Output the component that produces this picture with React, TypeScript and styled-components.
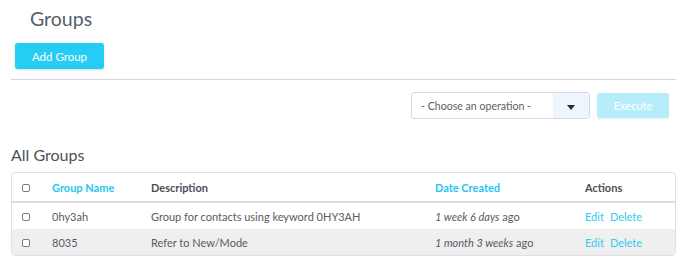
import React, { FC } from 'react';
import styled, { createGlobalStyle } from 'styled-components';

const GlobalStyle = createGlobalStyle`
    body {
        margin: 0;
        background: #fff;
        font-family: Lato, "Open Sans", sans-serif;
        color: #555a60;
    }
`;

const Page = styled.div`
    display: flex;
    flex-direction: column;
    padding: 0 12px 0 11px;
`;

const Title = styled.h1`
    margin: 7px 0 0 19px;
    font-size: 19.5px;
    line-height: 24px;
    font-weight: 400;
    color: #565e6d;
`;

const AddButton = styled.button`
    align-self: flex-start;
    margin: 12px 0 0 4px;
    width: 89px;
    height: 26px;
    border: none;
    border-radius: 3px;
    background: #25cdf5;
    box-shadow: 0 1px 2px rgba(0, 0, 0, 0.15);
    color: #fff;
    font-family: inherit;
    font-size: 11.5px;
`;

const Rule = styled.hr`
    width: 100%;
    margin: 10px 0 0;
    border: none;
    border-top: 1px solid #d6d6d6;
`;

const Toolbar = styled.div`
    display: flex;
    justify-content: flex-end;
    align-items: center;
    gap: 7px;
    margin-top: 12px;
    padding-right: 7px;
`;

const Select = styled.div`
    display: flex;
    width: 179px;
    height: 27px;
    box-sizing: border-box;
    border: 1px solid #d3dae6;
    border-radius: 3px;
    overflow: hidden;
    background: #fff;
`;

const SelectText = styled.span`
    flex: 1;
    display: flex;
    align-items: center;
    padding-left: 9px;
    font-size: 10.6px;
    color: #5a5f66;
`;

const SelectArrow = styled.span`
    width: 36px;
    display: flex;
    align-items: center;
    justify-content: center;
    padding-top: 3px;
    background: #eef5fd;
`;

const ExecuteButton = styled.button`
    width: 72px;
    height: 25px;
    border: none;
    border-radius: 3px;
    background: #b7edfa;
    box-shadow: 0 1px 2px rgba(0, 0, 0, 0.08);
    color: #fff;
    font-family: inherit;
    font-size: 11px;
`;

const SectionTitle = styled.h2`
    margin: 26px 0 0;
    font-size: 16px;
    line-height: 19px;
    font-weight: 400;
    color: #4d5058;
`;

const TableBox = styled.div`
    margin-top: 8px;
    border: 1px solid #dde0e6;
    border-radius: 4px;
    overflow: hidden;
`;

const Table = styled.table`
    width: 100%;
    border-collapse: collapse;
    table-layout: fixed;
    font-size: 11px;
`;

const HeadCell = styled.th<{ sortable?: boolean }>`
    height: 28px;
    padding: 0 0 0 10px;
    text-align: left;
    font-weight: 700;
    color: ${p => (p.sortable ? '#27c6ef' : '#4a4e55')};
    border-bottom: 2px solid #dcdcdc;
`;

const Row = styled.tr<{ shaded?: boolean }>`
    background: ${p => (p.shaded ? '#efefef' : '#fff')};
`;

const Cell = styled.td`
    height: 26px;
    padding: 0 0 0 10px;
    color: #585c62;
    white-space: nowrap;
`;

const Check = styled.input.attrs({ type: 'checkbox' })`
    appearance: none;
    display: block;
    width: 8px;
    height: 8px;
    margin: 1px 0 0 0;
    border: 1px solid #7b7b7b;
    border-radius: 2px;
    background: #fff;
`;

const Link = styled.a`
    color: #35c9ef;
    text-decoration: none;
    margin-right: 6px;
`;

const groups = [
    { name: '0hy3ah', description: 'Group for contacts using keyword 0HY3AH', created: '1 week 6 days' },
    { name: '8035', description: 'Refer to New/Mode', created: '1 month 3 weeks' },
];

const App: FC = () => (
    <>
        <GlobalStyle />
        <Page>
            <Title>Groups</Title>
            <AddButton>Add Group</AddButton>
            <Rule />
            <Toolbar>
                <Select>
                    <SelectText>- Choose an operation -</SelectText>
                    <SelectArrow>
                        <svg width="8" height="5" viewBox="0 0 8 5">
                            <path d="M0 0h8L4 5z" fill="#262b40" />
                        </svg>
                    </SelectArrow>
                </Select>
                <ExecuteButton>Execute</ExecuteButton>
            </Toolbar>
            <SectionTitle>All Groups</SectionTitle>
            <TableBox>
                <Table>
                    <colgroup>
                        <col style={{ width: 30 }} />
                        <col style={{ width: 99 }} />
                        <col style={{ width: 284 }} />
                        <col style={{ width: 150 }} />
                        <col />
                    </colgroup>
                    <thead>
                        <tr>
                            <HeadCell><Check /></HeadCell>
                            <HeadCell sortable>Group Name</HeadCell>
                            <HeadCell>Description</HeadCell>
                            <HeadCell sortable>Date Created</HeadCell>
                            <HeadCell>Actions</HeadCell>
                        </tr>
                    </thead>
                    <tbody>
                        {groups.map((group, i) => (
                            <Row key={group.name} shaded={i % 2 === 1}>
                                <Cell><Check /></Cell>
                                <Cell>{group.name}</Cell>
                                <Cell>{group.description}</Cell>
                                <Cell><i>{group.created}</i> ago</Cell>
                                <Cell>
                                    <Link href="#">Edit</Link>
                                    <Link href="#">Delete</Link>
                                </Cell>
                            </Row>
                        ))}
                    </tbody>
                </Table>
            </TableBox>
        </Page>
    </>
);

export default App;
